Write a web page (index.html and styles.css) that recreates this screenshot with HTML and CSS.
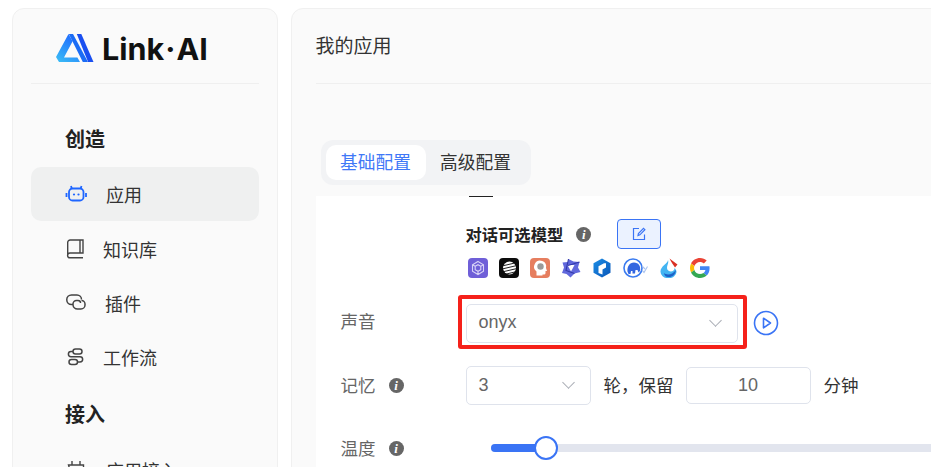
FILE: index.html
```html
<!DOCTYPE html>
<html>

	<head>
		<meta charset="UTF-8">
		<title>Link·AI</title>
		<link rel="stylesheet" href="styles.css">
	</head>

	<body>
		<div class="side">
			<div class="logo">
				<svg class="logoMark" width="38" height="29" viewBox="0 0 38 29">
					<defs>
						<linearGradient id="logoA" x1="0" y1="1" x2="0.6" y2="0">
							<stop offset="0" stop-color="#3cc0f5" />
							<stop offset="1" stop-color="#1f6bff" />
						</linearGradient>
					</defs>
					<path d="M12.500 0L0 23l3 5h21l-2.600-4.600H8L14.600 11l2-3.700L14.500 3.500z" fill="url(#logoA)" />
					<path d="M12.800 0h4.200l15 28h-5.200z" fill="#1b6cf5" />
					<path d="M20.800 0h4.500L37.500 28h-5.400z" fill="#1a4ff0" />
				</svg>
				<span class="logoText">Link<span class="logoDot">·</span>AI</span>
			</div>
			<h3 class="navTitle">创造</h3>
			<ul class="nav">
				<li class="current">
					<svg class="navIcon" width="22" height="18" viewBox="0 0 22 18" fill="none" stroke="#1f66ff" stroke-width="1.800">
						<rect x="4" y="3.500" width="14.500" height="12" rx="3.500" />
						<path d="M6.800 3.500L6 1M15.700 3.500L16.500 1M1.500 8v4M21 8v4" />
						<circle cx="9" cy="9.500" r="1.100" fill="#1f66ff" stroke="none" />
						<circle cx="13.500" cy="9.500" r="1.100" fill="#1f66ff" stroke="none" />
					</svg>
					<span class="navText wide">应用</span>
				</li>
				<li>
					<svg class="navIcon" width="22" height="20" viewBox="0 0 22 20" fill="none" stroke="#444" stroke-width="1.400">
						<path d="M2.700 15.500V3.500A2.500 2.500 0 0 1 5.200 1H18v13H5a2.400 2.400 0 0 0 0 4.800h13" />
						<path d="M15 1v13" />
					</svg>
					<span class="navText">知识库</span>
				</li>
				<li>
					<svg class="navIcon" width="22" height="18" viewBox="0 0 22 18" fill="none" stroke="#444" stroke-width="1.500">
						<path d="M8 10.500H6.500a4.700 4.700 0 0 1 0-9.500H12a4.500 4.500 0 0 1 4.500 4.500" />
						<path d="M16.500 6.500a3.500 3.500 0 0 1 3.500 3.500v1a4 4 0 0 1-4 4h-3.500A4.500 4.500 0 0 1 8 10.500V10a3.500 3.500 0 0 1 3.500-3.500h1.500a2.500 2.500 0 0 1 2.500 2.500" />
					</svg>
					<span class="navText gap18">插件</span>
				</li>
				<li>
					<svg class="navIcon" width="22" height="18" viewBox="0 0 22 18" fill="none" stroke="#444" stroke-width="1.500">
						<rect x="8" y="1" width="9" height="5" rx="2.500" />
						<rect x="4" y="11.500" width="8.500" height="5" rx="2.500" />
						<path d="M8 3.500H6a2.500 2.500 0 0 0 0 5.200h9a2.600 2.600 0 0 1 0 5.300h-2.500" />
					</svg>
					<span class="navText">工作流</span>
				</li>
			</ul>
			<h3 class="navTitle second">接入</h3>
			<ul class="nav">
				<li>
					<svg class="navIcon" width="22" height="20" viewBox="0 0 22 20" fill="none" stroke="#444" stroke-width="1.400">
						<path d="M7 1v4M15 1v4M3.500 5h15v7a5 5 0 0 1-5 5h-3a5 5 0 0 1-5-5z" />
					</svg>
					<span class="navText wide">应用接入</span>
				</li>
			</ul>
		</div>

		<div class="main">
			<div class="pageTitle">我的应用</div>
			<div class="tabs">
				<span class="tab active">基础配置</span>
				<span class="tab">高级配置</span>
			</div>
			<div class="panel">
				<div class="clipped"></div>

				<div class="row modelRow">
					<div class="label"></div>
					<div class="models">
						<div class="modelHead">
							<b>对话可选模型</b>
							<span class="info">i</span>
							<span class="editBtn">
								<svg width="14" height="14" viewBox="0 0 14 14" fill="none" stroke="#3a74f5" stroke-width="1.200">
									<path d="M12.500 7.500v5h-11v-11h5.500" />
									<path d="M6 8.500l.4-2L11.500 1.300l1.400 1.400-5 5.100z" />
								</svg>
							</span>
						</div>
						<div class="modelIcons">
							<svg width="20" height="20" viewBox="0 0 20 20">
								<rect width="20" height="20" rx="4" fill="#6f5fd8" />
								<path d="M10 3.500l5.500 3.200v6.600L10 16.500l-5.500-3.200V6.700zM7.200 8.300L10 6.700l2.800 1.600v3.400L10 13.300l-2.800-1.600zM4.500 6.700l2.700 1.600M15.500 6.700l-2.700 1.600M10 16.500v-3.200" fill="none" stroke="#d8d2f7" stroke-width="1.100" />
							</svg>
							<svg width="20" height="20" viewBox="0 0 20 20">
								<rect width="20" height="20" rx="4" fill="#0c0c0c" />
								<circle cx="10.500" cy="10" r="6.500" fill="#fff" />
								<path d="M3 8l15-3.500M3 11l15-3.500M3 14l15-3.500M3 17l15-3.500" stroke="#0c0c0c" stroke-width="0.900" />
							</svg>
							<svg width="20" height="20" viewBox="0 0 20 20">
								<rect width="20" height="20" rx="4" fill="#e67e5f" />
								<path d="M6.500 17.500v-4A6 6 0 1 1 16 10l1 3h-1.500v2a1.500 1.500 0 0 1-1.500 1.500h-1.500v1z" fill="#fff" />
								<circle cx="10.500" cy="8.500" r="3.200" fill="#9a9a9a" />
							</svg>
							<svg width="20" height="20" viewBox="0 0 20 20">
								<path d="M7.500 1l5 2.500 6 .5L17 9.500l2.500 4.500-6 1.500L9.500 19.500 5.500 16l-4.500-1 2-5.500L1.500 4.500 7 4z" fill="#6168dc" />
								<path d="M6.500 7h7l-3.500 6.500z" fill="#fff" />
								<path d="M7.500 1L5 12.500 13.500 15.500M18.500 4L7 7.500" fill="none" stroke="#3239a8" stroke-width="1.100" />
							</svg>
							<svg width="20" height="20" viewBox="0 0 20 20">
								<defs>
									<linearGradient id="hexA" x1="0" y1="0" x2="1" y2="1">
										<stop offset="0" stop-color="#1c8ee6" />
										<stop offset="1" stop-color="#0a56b8" />
									</linearGradient>
								</defs>
								<path d="M10 0.500l8.500 4.800v9.400L10 19.500l-8.500-4.800V5.300z" fill="url(#hexA)" />
								<path d="M6.500 15V8.200L12 5.200h2v4.300l-3.500 1.900V16.500z" fill="#fff" />
							</svg>
							<svg class="wideIcon" width="26" height="20" viewBox="0 0 26 20">
								<circle cx="10" cy="10" r="9" fill="none" stroke="#3a7bf0" stroke-width="1.600" />
								<path d="M4.500 13.500c-.5-5 2-9 6.500-9s7 3.500 6 8.500l-1.500 1.500-1-2.500h-2l-.5 3.500h-2.500V13H8l-.5 3H5.500z" fill="#3467e0" />
								<path d="M19 12l2 2.500 3.500-6M19 8l3 3" fill="none" stroke="#a9c2ee" stroke-width="1.100" />
							</svg>
							<svg width="20" height="20" viewBox="0 0 20 20">
								<path d="M9 2C9 5.500 1.500 8 1.500 13.500a8 6.500 0 0 0 16 .5c0-2-1-3-2-4 0 2-1.500 3.500-3.500 3.500S8 12 8 10c0-3 2-5 1-8z" fill="#43b4f2" />
								<path d="M10.500 0.500L18.500 6.500 16 9.500c-1-2-3.500-4.500-5.500-9z" fill="#d93025" />
								<path d="M5 15c3 2.500 8 2 12-3-.5 4.500-3.500 7-7 7S5.500 17.500 5 15z" fill="#1d62c9" />
							</svg>
							<svg width="20" height="20" viewBox="0 0 48 48">
								<path d="M24 9.500c3.540 0 6.710 1.220 9.210 3.600l6.850-6.850C35.900 2.380 30.470 0 24 0 14.620 0 6.510 5.380 2.560 13.220l7.980 6.190C12.430 13.720 17.740 9.500 24 9.500z" fill="#ea4335" />
								<path d="M46.980 24.550c0-1.570-.15-3.090-.38-4.550H24v9.020h12.940c-.58 2.960-2.260 5.480-4.780 7.180l7.730 6c4.510-4.180 7.090-10.360 7.090-17.650z" fill="#4285f4" />
								<path d="M10.530 28.590c-.48-1.450-.76-2.990-.76-4.590s.27-3.140.76-4.590l-7.980-6.190C.92 16.460 0 20.120 0 24c0 3.880.92 7.540 2.560 10.780l7.970-6.190z" fill="#fbbc05" />
								<path d="M24 48c6.480 0 11.930-2.130 15.890-5.810l-7.730-6c-2.150 1.450-4.920 2.300-8.160 2.300-6.260 0-11.570-4.220-13.470-9.910l-7.980 6.190C6.510 42.620 14.620 48 24 48z" fill="#34a853" />
							</svg>
						</div>
					</div>
				</div>

				<div class="row voiceRow">
					<div class="label">声音</div>
					<div class="mark">
						<div class="select voiceSelect">
							<span>onyx</span>
							<i class="arrow"></i>
						</div>
					</div>
					<svg class="play" width="26" height="26" viewBox="0 0 26 26" fill="none" stroke="#3a74f5" stroke-width="1.600">
						<circle cx="13" cy="13" r="11.500" />
						<path d="M10.500 8.200l7 4.800-7 4.800z" stroke-linejoin="round" />
					</svg>
				</div>

				<div class="row memoryRow">
					<div class="label">记忆<span class="info">i</span></div>
					<div class="memory">
						<div class="select roundSelect">
							<span>3</span>
							<i class="arrow"></i>
						</div>
						<span class="unit">轮，保留</span>
						<div class="numInput">10</div>
						<span class="unit">分钟</span>
					</div>
				</div>

				<div class="row sliderRow">
					<div class="label">温度<span class="info">i</span></div>
					<div class="slider">
						<div class="sliderFill"></div>
						<div class="sliderThumb"></div>
					</div>
				</div>
			</div>
		</div>
	</body>

</html>
```

FILE: styles.css
```css
* {
	margin: 0;
	padding: 0;
	list-style: none;
	box-sizing: border-box;
}

body {
	display: flex;
	gap: 13px;
	width: 931px;
	height: 467px;
	padding: 8px 0 0 12px;
	overflow: hidden;
	background: #fff;
	color: #333;
	font-family: "Liberation Sans", "Noto Sans CJK SC", sans-serif;
}

/* left menu */
.side {
	flex: none;
	width: 265.500px;
	height: 600px;
	padding: 0 18px;
	background: #fafafa;
	border: 1px solid #f0f0f0;
	border-radius: 12px;
}

.logo {
	display: flex;
	align-items: center;
	gap: 8px;
	height: 75px;
	padding: 5px 0 0 25px;
	border-bottom: 1px solid #efefef;
}

.logoText {
	font-family: Inter, "Liberation Sans", sans-serif;
	font-size: 30.500px;
	font-weight: 700;
	color: #111;
}

.logoDot {
	margin: 0 1px;
}

.navTitle {
	display: flex;
	align-items: center;
	height: 54px;
	padding: 0 0 2px 34px;
	margin-bottom: 1px;
	font-size: 20px;
	font-weight: 600;
	color: #222;
}

.logo + .navTitle {
	margin-top: 28px;
}

.navTitle.second {
	margin-top: 3px;
}

.nav li {
	display: flex;
	align-items: center;
	height: 54.400px;
	padding-left: 34px;
	border-radius: 10px;
	font-size: 18px;
}

.nav li.current {
	background: #eff0f0;
}

.navIcon {
	flex: none;
	width: 22px;
}

.navText {
	margin-left: 16px;
}

.navText.wide {
	margin-left: 19px;
}

.navText.gap18 {
	margin-left: 18px;
}

/* right part */
.main {
	flex: none;
	width: 800px;
	height: 600px;
	background: #fafafa;
	border: 1px solid #f0f0f0;
	border-radius: 12px;
}

.pageTitle {
	height: 75px;
	margin-left: 24px;
	padding-top: 25px;
	border-bottom: 1px solid #efefef;
	font-size: 19px;
	line-height: 26px;
}

.tabs {
	display: inline-flex;
	margin: 56px 0 0 29px;
	padding: 5px;
	background: #f2f3f5;
	border-radius: 12px;
}

.tab {
	width: 100px;
	height: 35px;
	line-height: 36px;
	text-align: center;
	font-size: 17.700px;
}

.tab.active {
	background: #fff;
	border-radius: 10px;
	color: #3f78f7;
}

.panel {
	height: 300px;
	margin: 11px 0 0 24px;
	padding-left: 25px;
	background: #fff;
}

.clipped {
	width: 24px;
	height: 1px;
	margin-left: 128px;
	background: #222;
}

.row {
	display: grid;
	grid-template-columns: 117.500px auto 1fr;
	align-items: center;
}

.label {
	display: flex;
	align-items: center;
	padding-bottom: 2px;
	font-size: 17.500px;
	color: #666;
}

.label .info {
	margin: 2px 0 0 13px;
}

.info {
	flex: none;
	display: inline-block;
	width: 15px;
	height: 15px;
	line-height: 15px;
	border-radius: 50%;
	background: #666;
	color: #fff;
	text-align: center;
	font-family: "Liberation Serif", serif;
	font-size: 13px;
	font-style: italic;
	font-weight: 700;
}

.modelRow {
	margin-top: 22px;
}

.models {
	grid-column: 2 / 4;
	padding-left: 7.500px;
}

.modelHead {
	display: flex;
	align-items: center;
	height: 30px;
	font-size: 16.300px;
	color: #222;
}

.modelHead .info {
	margin-left: 13px;
}

.editBtn {
	display: flex;
	align-items: center;
	justify-content: center;
	width: 44px;
	height: 30px;
	margin-left: 26px;
	background: #ebf2ff;
	border: 1px solid #3a74f5;
	border-radius: 4px;
}

.modelIcons {
	display: flex;
	gap: 11px;
	margin-top: 9px;
	padding-left: 2px;
}

.modelIcons svg {
	flex: none;
}

.wideIcon {
	margin-right: -1px;
}

.voiceRow {
	margin-top: 16.500px;
}

/* red frame around the voice select */
.mark {
	width: 289px;
	height: 54px;
	padding: 5px 5px 5px 3.500px;
	border: 4px solid #f5211a;
	border-radius: 3px;
}

.select {
	display: flex;
	align-items: center;
	justify-content: space-between;
	height: 39px;
	padding: 0 13px 0 12px;
	background: #fff;
	border: 1px solid #dfe3ec;
	border-radius: 5px;
	font-size: 18px;
	color: #666;
}

.voiceSelect span {
	margin-bottom: 2px;
}

.arrow {
	display: block;
	width: 9px;
	height: 9px;
	margin: -5px 4px 0 0;
	border-right: 1px solid #a9adb5;
	border-bottom: 1px solid #a9adb5;
	transform: rotate(45deg);
}

.play {
	margin: 2px 0 0 6px;
}

.memoryRow {
	margin-top: 17px;
}

.memory {
	grid-column: 2 / 4;
	display: flex;
	align-items: center;
	padding-left: 7.500px;
}

.roundSelect {
	width: 125px;
}

.unit {
	margin-left: 13px;
	padding-bottom: 1px;
	font-size: 17.500px;
	color: #333;
}

.numInput {
	width: 125px;
	height: 37px;
	line-height: 35px;
	margin-left: 12px;
	border: 1px solid #dfe3ec;
	border-radius: 5px;
	text-align: center;
	font-size: 18px;
	color: #666;
}

.sliderRow {
	margin-top: 27.500px;
	height: 32px;
}

.slider {
	grid-column: 2 / 4;
	position: relative;
	height: 8px;
	margin-left: 32.500px;
	border-radius: 4px;
	background: #e2e5ee;
}

.sliderFill {
	width: 55px;
	height: 8px;
	border-radius: 4px 0 0 4px;
	background: #3a74f5;
}

.sliderThumb {
	position: absolute;
	left: 43px;
	top: -8px;
	width: 24px;
	height: 24px;
	background: #fff;
	border: 2px solid #3a74f5;
	border-radius: 50%;
}
```
